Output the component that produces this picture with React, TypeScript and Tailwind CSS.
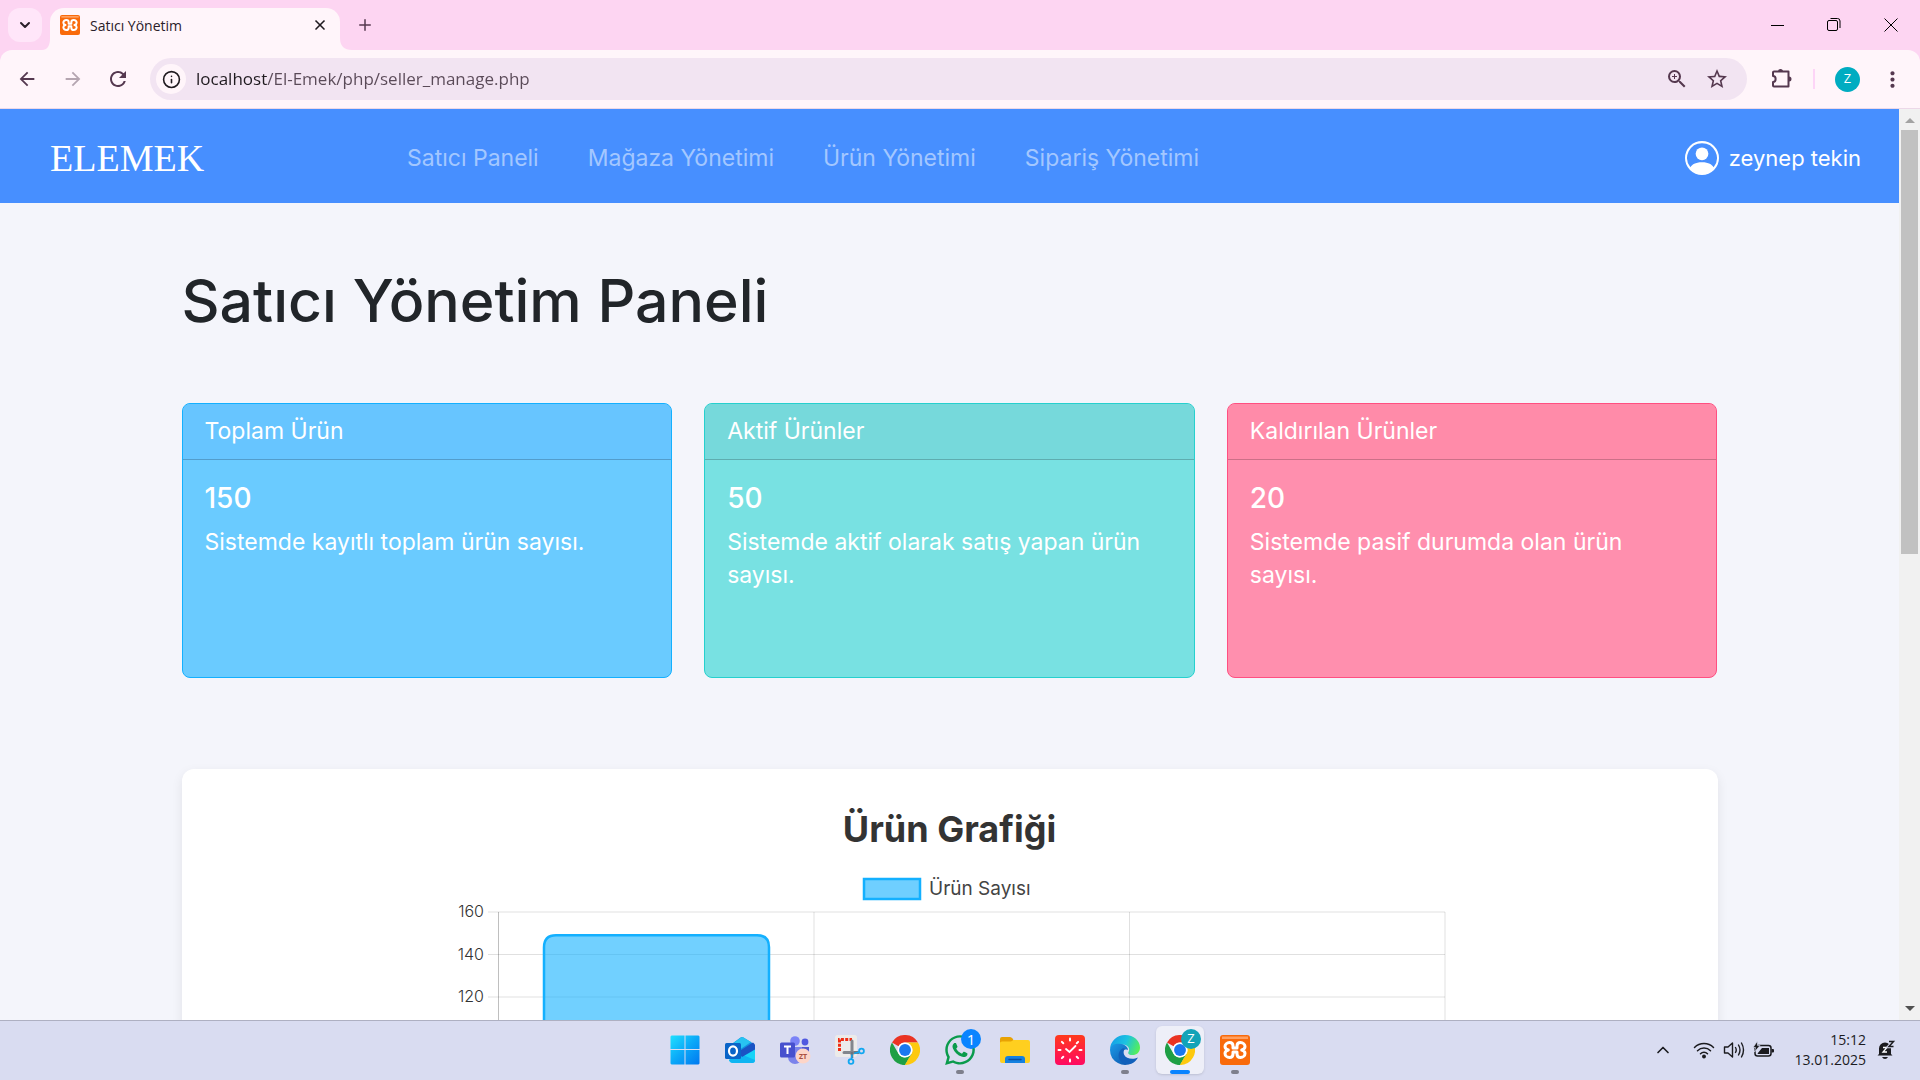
import type { ReactNode } from 'react';
import { BsPersonCircle } from 'react-icons/bs';
import { FaWhatsapp } from 'react-icons/fa';
import { MdArrowBack, MdArrowForward, MdMoreVert, MdRefresh, MdStarBorder, MdZoomIn } from 'react-icons/md';
import { ChevronDown, ChevronUp, Info, Plus, X } from 'lucide-react';

function Xampp({ size }: { size: number }) {
  return (
    <svg width={size} height={size} viewBox="0 0 30 30" aria-hidden="true">
      <rect width="30" height="30" rx="3" fill="#f96a0b" />
      <path d="M2 1.5h26v2.500H2z" fill="#ffa061" />
      <path
        d="M9.500 7.500C12 7.500 13 9 13 11v2h4v-2c0-2 1-3.500 3.500-3.500S25 9.500 25 11.500q0 2.500-3.300 3.500Q25 16 25 18.500c0 2-2 4-4.500 4S17 21 17 19v-2h-4v2c0 2-1 3.500-3.500 3.500S5 20.500 5 18.500Q5 16 8.300 15 5 14 5 11.500c0-2 2-4 4.500-4z"
        fill="none"
        stroke="#fff"
        strokeWidth="3"
        strokeLinejoin="round"
      />
    </svg>
  );
}

function WindowsLogo() {
  return (
    <svg width="30" height="30" viewBox="0 0 30 30" aria-hidden="true">
      <defs>
        <linearGradient id="win" x1="0" y1="0" x2="1" y2="1">
          <stop offset="0" stopColor="#1fe0ff" />
          <stop offset="0.5" stopColor="#0ba8f8" />
          <stop offset="1" stopColor="#0078f0" />
        </linearGradient>
      </defs>
      <path d="M1.500.5H14.500V14H.5V1.500zM15.500.5H28.500l1 1V14H15.500zM.5 15H14.500V29.500H1.500l-1-1zM15.500 15H29.500V28.500l-1 1H15.500z" fill="url(#win)" />
    </svg>
  );
}

function OutlookLogo() {
  return (
    <svg width="32" height="30" viewBox="0 0 32 30" aria-hidden="true">
      <path d="M5 11 16.500 2.500Q18 1.500 19.500 2.500L30 9v8L8 24z" fill="#1490df" />
      <path d="M8 9 17 2.500q1-.8 2.500 0L27 7 12 17z" fill="#28c3f2" />
      <path d="M31 10v15q0 3-3 3H9q-3 0-4-3l9-6z" fill="#17d4f7" />
      <path d="M14 18 31 25q0 3-3 3H9q-3 0-4-3z" fill="#0fb5f2" />
      <path d="M14 17 29 7.500l2 2v5L18 22z" fill="#1a53c4" />
      <rect x="1" y="8" width="16" height="16" rx="1.500" fill="#0a64c8" />
      <ellipse cx="9" cy="16" rx="4" ry="4.700" fill="none" stroke="#fff" strokeWidth="2.200" />
    </svg>
  );
}

function TeamsLogo() {
  return (
    <svg width="32" height="30" viewBox="0 0 32 30" aria-hidden="true">
      <circle cx="16" cy="6" r="4.800" fill="#7b83f7" />
      <circle cx="26" cy="7" r="3.400" fill="#5059e0" />
      <path d="M19 12h11v10a6 6 0 0 1-8 5z" fill="#5059d0" />
      <path d="M9 12h14v10a7 7 0 0 1-14 0z" fill="#7b83eb" />
      <rect x="1" y="7.500" width="15" height="15" rx="1.500" fill="#4650ce" />
      <path d="M5 11.500h7M8.500 11.500V19" stroke="#fff" strokeWidth="2" />
      <circle cx="24" cy="21" r="7.500" fill="#fdd5c8" />
      <text x="24" y="24" textAnchor="middle" fontSize="7" fontWeight="700" fill="#a8503f" fontFamily="Open Sans, sans-serif">ZT</text>
    </svg>
  );
}

function SnipLogo() {
  return (
    <svg width="32" height="32" viewBox="0 0 32 32" aria-hidden="true">
      <rect x="1" y="1" width="22" height="22" rx="2.500" fill="#ecebea" />
      <path d="M5.500 17V5.500H18" fill="none" stroke="#f02c14" strokeWidth="3" strokeDasharray="3 1.300" />
      <path d="M18 7V20M10 18.500h14" stroke="#82868d" strokeWidth="3" strokeLinecap="round" />
      <path d="M18 18v6M20 18.500h5" stroke="#6d737b" strokeWidth="2.500" />
      <circle cx="27.500" cy="17" r="2.400" fill="none" stroke="#12a7f0" strokeWidth="1.800" />
      <circle cx="17" cy="27.500" r="2.400" fill="none" stroke="#12a7f0" strokeWidth="1.800" />
      <path d="M20 19.500l5.500-1.500M18 20.500l-.5 5" stroke="#12a7f0" strokeWidth="1.500" />
    </svg>
  );
}

function ChromeLogo() {
  return (
    <svg width="30" height="30" viewBox="0 0 48 48" aria-hidden="true">
      <path d="M3.200 12A24 24 0 0 1 44.800 12H24A12 12 0 0 0 13.600 18z" fill="#ea3323" />
      <path d="M3.200 12 13.600 30A12 12 0 0 0 24 36L24 48A24 24 0 0 1 3.200 12z" fill="#1e9f45" />
      <path d="M34.400 30 24 48A24 24 0 0 0 44.800 12H24A12 12 0 0 1 34.400 30z" fill="#fdc90e" />
      <path d="M34.400 30 24 48l-5-1 5-11z" fill="#1e9f45" />
      <path d="M34.400 30 24 48h2z" fill="#fdc90e" />
      <circle cx="24" cy="24" r="12" fill="#fff" />
      <circle cx="24" cy="24" r="9.500" fill="#1a78f0" />
    </svg>
  );
}

function FolderLogo() {
  return (
    <svg width="30" height="28" viewBox="0 0 30 28" aria-hidden="true">
      <path d="M0 3q0-2 2-2h8q1.500 0 2.500 1.500L14 5v8H0z" fill="#e8a204" />
      <path d="M0 7q0-1.500 2-1.500h9L13.500 4H28q2 0 2 2v19q0 2-2 2H2q-2 0-2-2z" fill="#ffcf1f" />
      <path d="M5 27v-4q0-3 3-3h14q3 0 3 3v4z" fill="#1581e0" />
      <path d="M9 23.500h12" stroke="#0b4f9e" strokeWidth="1.500" strokeLinecap="round" />
    </svg>
  );
}

function ClockLogo() {
  const ticks = Array.from({ length: 8 }, (_, i) => i * 45);
  return (
    <svg width="30" height="30" viewBox="0 0 30 30" aria-hidden="true">
      <defs>
        <linearGradient id="clock" x1="0" y1="0" x2="0" y2="1">
          <stop offset="0" stopColor="#ff3a1c" />
          <stop offset="1" stopColor="#ff0a62" />
        </linearGradient>
      </defs>
      <rect width="30" height="30" rx="4" fill="url(#clock)" />
      {ticks.map((a) => (
        <path key={a} d="M15 3.500v2" stroke="#fff" strokeWidth="2" strokeLinecap="round" transform={`rotate(${a} 15 15)`} />
      ))}
      <path d="m11 14 3.500 3 6-6" fill="none" stroke="#fff" strokeWidth="1.800" strokeLinecap="round" />
    </svg>
  );
}

function EdgeLogo() {
  return (
    <svg width="30" height="30" viewBox="0 0 30 30" aria-hidden="true">
      <defs>
        <linearGradient id="edgeTop" x1="0" y1="0.300" x2="1" y2="0.600">
          <stop offset="0" stopColor="#159ee8" />
          <stop offset="0.500" stopColor="#1cc3e0" />
          <stop offset="1" stopColor="#56ef57" />
        </linearGradient>
        <linearGradient id="edgeSide" x1="0" y1="0" x2="1" y2="1">
          <stop offset="0" stopColor="#1b9be8" />
          <stop offset="1" stopColor="#0c4fa8" />
        </linearGradient>
      </defs>
      <path d="M0 14A15 15 0 0 1 15 0C24 0 30 6 30 12.500c0 5-3.500 7.500-7.500 7.500-3.500 0-5-1.500-4-3 2-4-1-7-5.500-7.500C6 9 1 11 0 14z" fill="url(#edgeTop)" />
      <path d="M0 15C0 10 5 8.500 9.500 8.700c5 .2 8.500 3 8.500 6.300-6-2-9 4-5.500 8.500 3 4 8 4.500 10.500 4A15 15 0 0 1 0 15z" fill="url(#edgeSide)" />
      <path d="M12.500 13.500c-5 3-5.500 10 0 14.500 5 3 12 1 15.500-5.500-5 2.500-12 1.500-14-3-.7-2-.5-4 1-5.500-.8-.6-1.700-.8-2.500-.5z" fill="#1160bb" />
    </svg>
  );
}

type TaskItem = { name: string; icon: ReactNode; badge?: string; running?: boolean; active?: boolean };

const tasks: TaskItem[] = [
  { name: 'Başlat', icon: <WindowsLogo /> },
  { name: 'Outlook', icon: <OutlookLogo /> },
  { name: 'Teams', icon: <TeamsLogo /> },
  { name: 'Ekran Alıntısı', icon: <SnipLogo /> },
  { name: 'Chrome', icon: <ChromeLogo /> },
  { name: 'WhatsApp', icon: <FaWhatsapp size={34} color="#0a9b4c" />, badge: '1', running: true },
  { name: 'Dosya Gezgini', icon: <FolderLogo /> },
  { name: 'Saat', icon: <ClockLogo /> },
  { name: 'Edge', icon: <EdgeLogo />, running: true },
  { name: 'Chrome Z', icon: <ChromeLogo />, badge: 'Z', active: true },
  { name: 'XAMPP', icon: <Xampp size={30} />, running: true },
];

function TabBar() {
  return (
    <div className="flex h-[50px] shrink-0 items-end bg-[#fdd5f2]">
      <button aria-label="Sekmelerde ara" className="mb-2 ml-2 flex h-[34px] w-[34px] items-center justify-center rounded-xl bg-[#ffe6f9] text-[#2b1f29]">
        <ChevronDown size={16} strokeWidth={3} />
      </button>
      <svg width="8" height="12" className="shrink-0" aria-hidden="true">
        <path d="M8 0v12H0Q8 12 8 0z" fill="#fff5fa" />
      </svg>
      <div className="flex h-[42px] w-[290px] items-center rounded-t-[14px] bg-[#fff5fa] pr-3 pb-2 pl-2.5">
        <Xampp size={20} />
        <span className="ml-2.5 flex-1 text-[14px] text-[#2a2029]">Satıcı Yönetim</span>
        <button aria-label="Sekmeyi kapat" className="text-[#1f1a1f]"><X size={16} strokeWidth={2.500} /></button>
      </div>
      <svg width="12" height="12" className="shrink-0" aria-hidden="true">
        <path d="M0 0v12h12Q0 12 0 0z" fill="#fff5fa" />
      </svg>
      <button aria-label="Yeni sekme" className="mb-4 ml-1 text-[#55384f]"><Plus size={18} /></button>
      <div className="flex-1" />
      <div className="flex h-full text-black">
        <button aria-label="Küçült" className="flex w-14 items-center justify-center">
          <svg width="14" height="14"><path d="M0 7.500h13" stroke="currentColor" /></svg>
        </button>
        <button aria-label="Geri yükle" className="flex w-14 items-center justify-center">
          <svg width="14" height="14" fill="none" stroke="currentColor">
            <rect x="0.500" y="2.500" width="10" height="10" rx="1.500" />
            <path d="M3.500.5h7q2.500 0 2.500 2.500v7" />
          </svg>
        </button>
        <button aria-label="Kapat" className="flex w-[58px] items-center justify-center">
          <svg width="14" height="14"><path d="M.5.5l13 13M13.500.5l-13 13" stroke="currentColor" /></svg>
        </button>
      </div>
    </div>
  );
}

function Toolbar() {
  return (
    <div className="bg-[#fdd5f2]">
      <div className="flex h-[59px] items-center rounded-t-xl border-b border-[#ecd8e8] bg-[#fff5fa] pl-4 text-[#55384f]">
        <button aria-label="Geri"><MdArrowBack size={22} /></button>
        <button aria-label="İleri" className="ml-6 text-[#b5a5b0]"><MdArrowForward size={22} /></button>
        <button aria-label="Yenile" className="ml-[22px]"><MdRefresh size={24} /></button>
        <div className="ml-5 flex h-[42px] flex-1 items-center rounded-full bg-[#f2e4f2] pr-[18px] pl-1.5">
          <button aria-label="Site bilgileri" className="flex h-[30px] w-[30px] items-center justify-center rounded-full bg-[#fff5fa] text-[#1f1a1f]">
            <Info size={19} />
          </button>
          <input
            aria-label="Adres"
            defaultValue="localhost/El-Emek/php/seller_manage.php"
            className="ml-2.5 flex-1 bg-[linear-gradient(90deg,#1f1a1f_71px,#5a4a58_71px)] bg-clip-text text-[17px] text-transparent outline-none"
          />
          <button aria-label="Yakınlaştır"><MdZoomIn size={24} /></button>
          <button aria-label="Yer işareti ekle" className="ml-4"><MdStarBorder size={24} /></button>
        </div>
        <button aria-label="Uzantılar" className="ml-6">
          <svg width="22" height="22" viewBox="0 0 22 22" aria-hidden="true">
            <path d="M3 3.500h14.500v15H3a1 1 0 0 1-1-1v-3.500c3.500 0 3.500-6 0-6V4.500a1 1 0 0 1 1-1z" fill="none" stroke="currentColor" strokeWidth="2" strokeLinejoin="round" />
            <path d="M7 3.500a2.500 2.500 0 0 1 5 0zM18 8.500a2.500 2.500 0 0 1 0 5z" fill="currentColor" />
          </svg>
        </button>
        <div className="ml-5 h-5 w-0.5 bg-[#fdd5f7]" />
        <button aria-label="Profil" className="ml-5 flex h-[25px] w-[25px] items-center justify-center rounded-full bg-[#00acc1] text-[13px] text-white">Z</button>
        <button aria-label="Menü" className="mr-[15px] ml-5"><MdMoreVert size={25} /></button>
      </div>
    </div>
  );
}

const links = ['Satıcı Paneli', 'Mağaza Yönetimi', 'Ürün Yönetimi', 'Sipariş Yönetimi'];

const cards = [
  { title: 'Toplam Ürün', value: 150, text: 'Sistemde kayıtlı toplam ürün sayısı.', tone: 'bg-[#6acbff] border-[#13b0ff]', head: 'bg-[#67c5ff]' },
  { title: 'Aktif Ürünler', value: 50, text: 'Sistemde aktif olarak satış yapan ürün sayısı.', tone: 'bg-[#78e1e2] border-[#26d0ce]', head: 'bg-[#76d9db]' },
  { title: 'Kaldırılan Ürünler', value: 20, text: 'Sistemde pasif durumda olan ürün sayısı.', tone: 'bg-[#ff8fae] border-[#ff4f81]', head: 'bg-[#ff8ba9]' },
];

const bars = [
  { value: 150, color: '#13b0ff' },
  { value: 50, color: '#26d0ce' },
  { value: 20, color: '#ff4f81' },
];

function Chart() {
  const y = (v: number) => 392 - (v / 160) * 340;
  const ticks = [0, 20, 40, 60, 80, 100, 120, 140, 160];
  return (
    <svg viewBox="0 0 1000 420" className="mx-auto block w-full max-w-[1000px]" role="img" aria-label="Ürün Sayısı">
      <rect x="414" y="19" width="56" height="20" fill="#6fcfff" stroke="#13b0ff" strokeWidth="2.500" />
      <text x="479" y="35" fontSize="19" fill="#444">Ürün Sayısı</text>
      {ticks.map((t) => (
        <g key={t}>
          <path d={`M38 ${y(t)}H995`} stroke="#000" strokeOpacity="0.120" />
          <text x="34" y={y(t) + 5} fontSize="16" fontWeight="300" fill="#333" textAnchor="end">{t}</text>
        </g>
      ))}
      {[0, 1, 2, 3].map((i) => (
        <path key={i} d={`M${48.5 + i * 315.5} 52V402`} stroke="#000" strokeOpacity={i ? 0.12 : 0.25} />
      ))}
      {bars.map((b, i) => {
        const x = 94 + i * 315;
        const top = y(b.value) + 2;
        return (
          <path key={b.value} d={`M${x} 392V${top + 12}q0-12 12-12h201q12 0 12 12V392`} fill={b.color} fillOpacity="0.600" stroke={b.color} strokeWidth="2.500" />
        );
      })}
    </svg>
  );
}

function Page() {
  return (
    <div className='h-full min-w-0 flex-1 overflow-y-auto bg-[#f4f5fb] font-["Inter",sans-serif] text-[23px] leading-[33px] [scrollbar-width:none]'>
      <nav className="flex h-[94px] items-center bg-[#478fff] pt-1 pr-[38px] pl-[50px] text-white">
        <a href="#" className='w-[357px] font-["Liberation_Serif",serif] text-[38px]'>ELEMEK</a>
        <div className="flex flex-1 gap-[49px] text-[#a3c7ff]">
          {links.map((l) => <a key={l} href="#">{l}</a>)}
        </div>
        <a href="#" className="flex items-center gap-2.5 text-[22px]"><BsPersonCircle size={34} /><span>zeynep tekin</span></a>
      </nav>
      <main className="mx-auto w-[81%] max-w-[1536px]">
        <h1 className="pt-16 text-[59px] leading-[68px] font-medium text-[#212529]">Satıcı Yönetim Paneli</h1>
        <section className="mt-[68px] grid grid-cols-3 gap-8">
          {cards.map((c) => (
            <article key={c.title} className={`h-[275px] overflow-hidden rounded-lg border text-white ${c.tone}`}>
              <h2 className={`border-b border-black/20 px-[22px] py-[11px] ${c.head}`}>{c.title}</h2>
              <div className="px-[22px] pt-[22px]">
                <p className="text-[28px] font-medium">{c.value}</p>
                <p className="mt-[11px]">{c.text}</p>
              </div>
            </article>
          ))}
        </section>
        <section className="mt-[91px] rounded-xl bg-white px-8 pt-10 pb-8 shadow-[0_4px_12px_rgba(0,0,0,0.080)]">
          <h2 className="text-center text-[36px] leading-10 font-bold text-[#333]">Ürün Grafiği</h2>
          <div className="mt-[11px]"><Chart /></div>
        </section>
      </main>
    </div>
  );
}

function Scrollbar() {
  return (
    <div className="flex h-full w-[21px] shrink-0 flex-col items-center bg-[#f1f1f1] py-[9px]" aria-hidden="true">
      <svg width="10" height="5"><path d="M0 5l5-5 5 5z" fill="#a3a3a3" /></svg>
      <div className="mt-[7px] h-[47.5%] w-[17px] bg-[#c1c1c1]" />
      <div className="flex-1" />
      <svg width="10" height="5"><path d="M0 0l5 5 5-5z" fill="#505050" /></svg>
    </div>
  );
}

function Taskbar() {
  return (
    <footer className="grid h-[60px] shrink-0 grid-cols-[1fr_auto_1fr] items-center border-t border-[#aeb0c2] bg-[#d9dcf1] pb-px text-[#1b1b1f]">
      <div />
      <div className="flex gap-[7px]">
        {tasks.map((t) => (
          <button key={t.name} aria-label={t.name} className={`relative flex h-12 w-12 items-center justify-center rounded-md ${t.active ? 'bg-[#eeeff8] shadow-sm' : ''}`}>
            {t.icon}
            {t.badge && (
              <span className={`absolute top-[3px] right-[3px] flex h-5 w-5 items-center justify-center rounded-full text-white ${t.active ? 'bg-[#12a3b8] text-[13px]' : 'bg-[#0a84ff] text-[15px]'}`}>{t.badge}</span>
            )}
            {t.running && <span className="absolute bottom-0 h-1 w-2 rounded-full bg-[#7e7f8c]" />}
            {t.active && <span className="absolute bottom-0 h-1 w-5 rounded-full bg-[#0a84ff]" />}
          </button>
        ))}
      </div>
      <div className="flex items-center justify-end pr-6">
        <button aria-label="Gizli simgeler"><ChevronUp size={20} /></button>
        <button aria-label="Hızlı ayarlar" className="ml-5 flex items-center gap-2">
          <svg width="22" height="18" viewBox="0 0 22 18" fill="none" stroke="currentColor" strokeWidth="1.500" strokeLinecap="round">
            <path d="M1.500 6.500a13.500 13.500 0 0 1 19 0M4.500 9.800a9.200 9.200 0 0 1 13 0M7.500 12.800a5 5 0 0 1 7 0" />
            <circle cx="11" cy="15.500" r="1.200" fill="currentColor" />
          </svg>
          <svg width="22" height="18" viewBox="0 0 22 18" fill="none" stroke="currentColor" strokeWidth="1.400" strokeLinecap="round" strokeLinejoin="round">
            <path d="M1.500 6v6h3.500l4.500 4V2L5 6zM12.500 6.500q1.500 2.500 0 5M15.500 4q3 5 0 10M18.500 2q4 7 0 14" />
          </svg>
          <svg width="22" height="18" viewBox="0 0 22 18">
            <rect x="2" y="4.500" width="16" height="10.500" rx="2.500" fill="none" stroke="currentColor" strokeWidth="1.500" />
            <path d="M4.500 12.500 9 7h7v6H5zM18.500 8h1.500q1 0 1 1v1.500q0 1-1 1h-1.500z" fill="currentColor" />
            <path d="M4.500 0 0 6.500h2.500L1.500 11 7 4.500H4.500z" fill="currentColor" stroke="#d9dcf1" strokeWidth="0.700" />
          </svg>
        </button>
        <button className="ml-5 text-right text-[14px] leading-5">15:12<br />13.01.2025</button>
        <button aria-label="Bildirimler" className="ml-2.5">
          <svg width="20" height="20" viewBox="0 0 20 20">
            <path d="M3 14V8.500a6 6 0 0 1 12 0V14l1.500 1.500H1.500zM6 17h6q-1 2-3 2t-3-2z" fill="currentColor" />
            <path d="M7 7.500h4L7 12h4" fill="none" stroke="#fff" strokeWidth="1.300" />
            <path d="M13 1.500h4.500L13 6.500h4.500" fill="none" stroke="#d9dcf1" strokeWidth="3.500" />
            <path d="M13 1.500h4.500L13 6.500h4.500" fill="none" stroke="currentColor" strokeWidth="1.500" />
          </svg>
        </button>
      </div>
    </footer>
  );
}

export default function App() {
  return (
    <div className='flex h-screen flex-col overflow-hidden font-["Open_Sans","Noto_Sans",sans-serif]'>
      <header className="shrink-0">
        <TabBar />
        <Toolbar />
      </header>
      <div className="flex min-h-0 flex-1">
        <Page />
        <Scrollbar />
      </div>
      <Taskbar />
    </div>
  );
}
